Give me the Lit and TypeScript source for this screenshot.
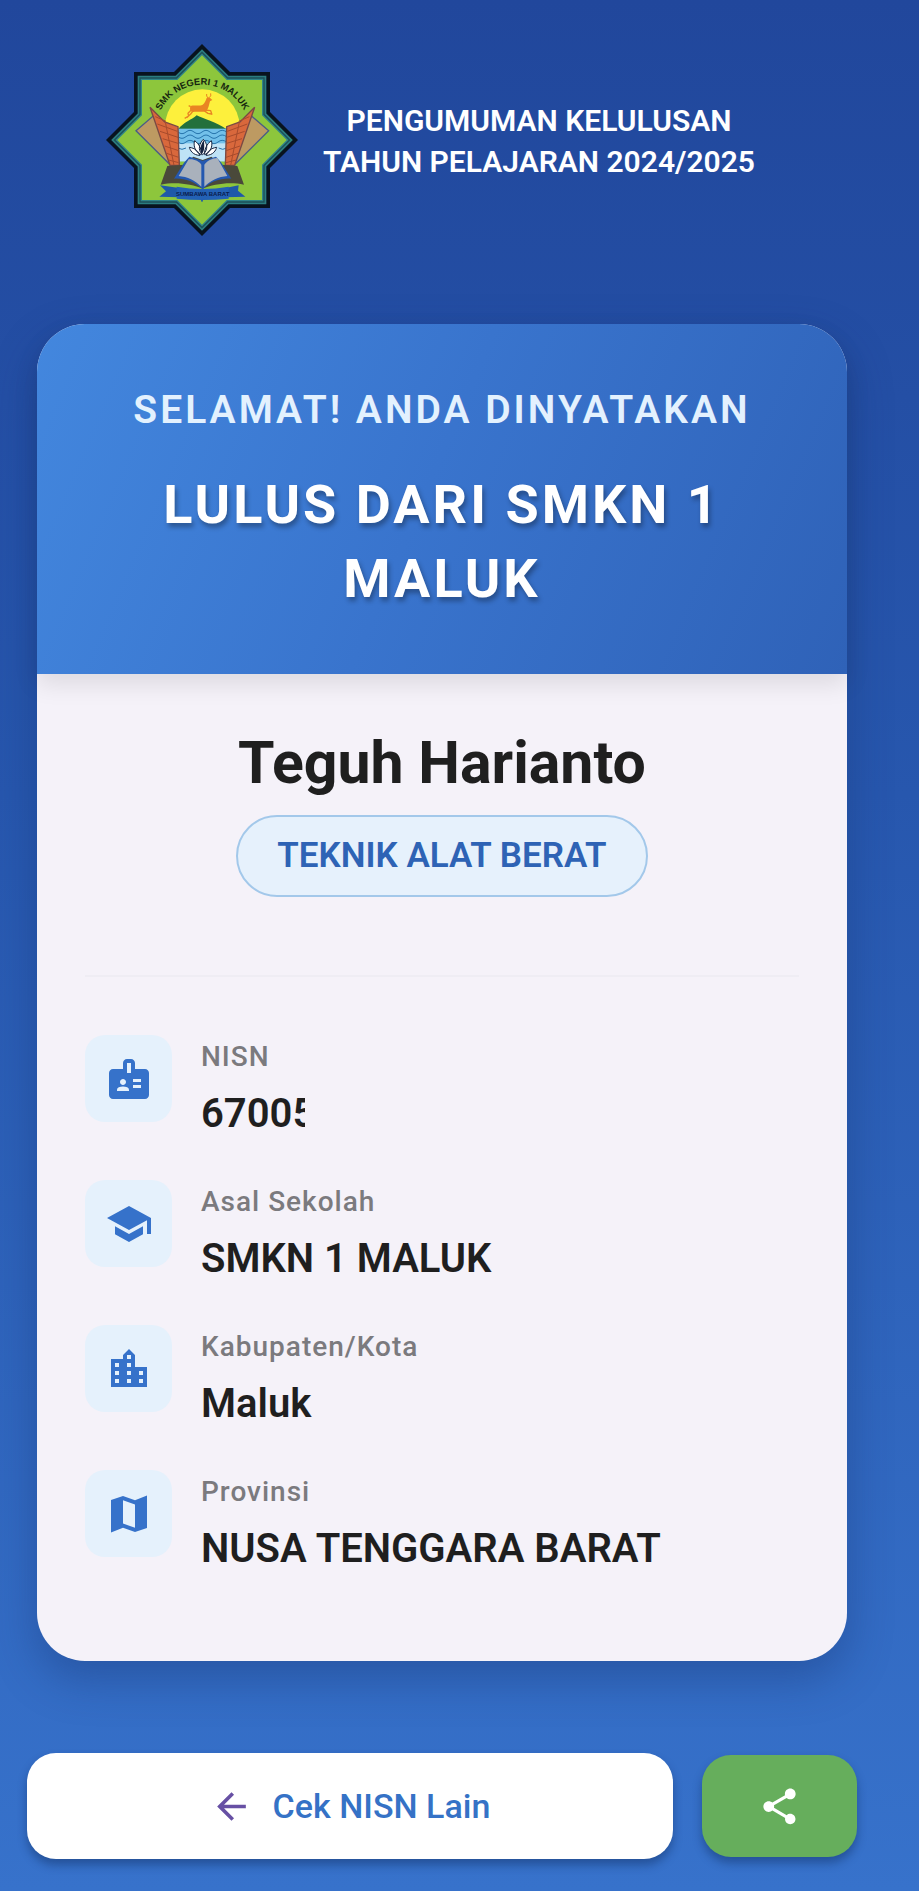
import { LitElement, html, css, svg } from "lit";
import { customElement, property } from "lit/decorators.js";

const ICONS: Record<string, string> = {
  badge:
    "M20 7h-5V4c0-1.1-.9-2-2-2h-2c-1.1 0-2 .9-2 2v3H4c-1.1 0-2 .9-2 2v11c0 1.1.9 2 2 2h16c1.1 0 2-.9 2-2V9c0-1.1-.9-2-2-2zM9 12c.83 0 1.5.67 1.5 1.5S9.83 15 9 15s-1.5-.67-1.5-1.5S8.17 12 9 12zm3 6H6v-.43c0-.6.36-1.15.92-1.39.65-.28 1.35-.43 2.08-.43s1.43.15 2.08.43c.56.24.92.78.92 1.39V18zm1-9h-2V4h2v5zm5 7.5h-4V15h4v1.5zm0-3h-4V12h4v1.5z",
  school:
    "M5 13.18v4L12 21l7-3.82v-4L12 17l-7-3.82zM12 3L1 9l11 6 9-4.91V17h2V9L12 3z",
  city:
    "M15 11V5l-3-3-3 3v2H3v14h18V11h-6zm-8 8H5v-2h2v2zm0-4H5v-2h2v2zm0-4H5V9h2v2zm6 8h-2v-2h2v2zm0-4h-2v-2h2v2zm0-4h-2V9h2v2zm0-4h-2V5h2v2zm6 12h-2v-2h2v2zm0-4h-2v-2h2v2z",
  map:
    "M15 5.1L9 3 3 5.02v16.2l6-2.33 6 2.1 6-2.02V2.77L15 5.1zm0 13.79l-6-2.11V5.11l6 2.11v11.67z",
  back:
    "M20 11H7.83l5.59-5.59L12 4l-8 8 8 8 1.41-1.41L7.83 13H20v-2z",
  share:
    "M18 16.08c-.76 0-1.44.3-1.96.77L8.91 12.7c.05-.23.09-.46.09-.7s-.04-.47-.09-.7l7.05-4.11c.54.5 1.25.81 2.04.81 1.66 0 3-1.34 3-3s-1.34-3-3-3-3 1.34-3 3c0 .24.04.47.09.7L8.04 9.81C7.5 9.31 6.79 9 6 9c-1.66 0-3 1.34-3 3s1.34 3 3 3c.79 0 1.5-.31 2.04-.81l7.12 4.16c-.05.21-.08.43-.08.65 0 1.61 1.31 2.92 2.92 2.92s2.92-1.31 2.92-2.92-1.31-2.92-2.92-2.92z",
};

@customElement("md-icon")
class MdIcon extends LitElement {
  @property() name = "badge";

  static styles = css`
    :host {
      display: inline-flex;
      width: 48px;
      height: 48px;
    }
    svg {
      width: 100%;
      height: 100%;
      fill: currentColor;
    }
  `;

  render() {
    return html`<svg viewBox="0 0 24 24" aria-hidden="true">
      <path d=${ICONS[this.name]}></path>
    </svg>`;
  }
}

/** Eight-pointed star: a square and a diamond laid over each other, shrunk by `inset`. */
function star(inset: number): string {
  const c = 316;
  const h = 204 - inset;
  const r = 288 - inset * 1.414;
  const k = r - h;
  const pts = [
    [0, -r], [k, -h], [h, -h], [h, -k], [r, 0], [h, k], [h, h], [k, h],
    [0, r], [-k, h], [-h, h], [-h, k], [-r, 0], [-h, -k], [-h, -h], [-k, -h],
  ];
  return pts.map(([x, y]) => `${c + x},${c + y}`).join(" ");
}

@customElement("school-crest")
class SchoolCrest extends LitElement {
  static styles = css`
    :host {
      display: block;
      width: 194px;
      height: 194px;
    }
    svg {
      display: block;
      width: 100%;
      height: 100%;
    }
    .motto {
      font: 700 28px "Liberation Sans", Arial, sans-serif;
      fill: #17260f;
    }
    .region {
      font: 700 18px "Liberation Sans", Arial, sans-serif;
      fill: #0a1c4c;
    }
  `;

  private wall(flip: boolean) {
    return svg`<g transform=${flip ? "translate(634 0) scale(-1 1)" : ""}>
      <polygon points="118,288 172,242 244,300 246,392 222,392" fill="#bd9a62" stroke="#4b5c86" stroke-width="4"></polygon>
      <polygon points="160,218 204,262 244,276 248,392 220,392" fill="#d9683c" stroke="#7a4a44" stroke-width="4"></polygon>
      <path d="M206 262L232 392M176 246l32 14M182 268l60 22M190 290l54 18M198 312l46 14M204 334l42 14M210 356l36 12M216 376l30 8" fill="none" stroke="#a84b2c" stroke-width="3"></path>
    </g>`;
  }

  render() {
    return html`<svg viewBox="25 25 582 582" role="img" aria-label="Logo SMK Negeri 1 Maluk">
      <polygon points=${star(0)} fill="#08131f"></polygon>
      <polygon points=${star(11)} fill="#2b7d80"></polygon>
      <polygon points=${star(16)} fill="#1d4f58"></polygon>
      <polygon points=${star(20)} fill="#2f8489"></polygon>
      <polygon points=${star(24)} fill="#8dc63c"></polygon>

      <circle cx="317" cy="276" r="112" fill="#fdf03c"></circle>
      <path d="M282 214C294 210 306 216 318 210C324 206 327 198 330 190L338 188 347 196 340 200C337 210 336 220 330 228C318 234 300 230 290 232C280 232 278 222 282 214z" fill="#e98423"></path>
      <path d="M286 224L274 236 276 244 264 251M290 228L282 238 270 249M324 226L342 228 346 240M322 228L334 236 344 238M282 216l-6 -3" fill="none" stroke="#e98423" stroke-width="4" stroke-linejoin="round"></path>
      <path d="M334 190q-6-6-4-12M337 189q8-4 5-13" fill="none" stroke="#e98423" stroke-width="3"></path>
      <path d="M244 284C262 262 284 256 300 242C318 252 360 262 390 284z" fill="#23703c"></path>

      <rect x="244" y="282" width="146" height="98" fill="#72c0ea"></rect>
      <rect x="244" y="326" width="146" height="54" fill="#bfe3f6"></rect>
      <path d="M244 292q12 10 24 0t24 0 24 0 24 0 24 0 26 0M244 306q12 10 24 0t24 0 24 0 24 0 24 0 26 0M244 322q12 10 24 0t24 0 24 0 24 0 24 0 26 0M244 340q12 8 24 0M366 340q12 8 24 0" fill="none" stroke="#2674ac" stroke-width="3"></path>
      <path d="M318 360C300 346 310 324 320 314C332 326 336 346 318 360zM314 360C292 352 290 328 294 318C308 328 316 346 314 360zM324 360C346 352 348 328 344 318C330 328 322 346 324 360zM310 362C288 362 280 346 278 338C294 340 306 350 310 362zM328 362C350 362 358 346 360 338C344 340 332 350 328 362z" fill="#ffffff" stroke="#15233f" stroke-width="3"></path>
      <path d="M316 358c-10-16 0-34 6-42 0 14 4 28-6 42z" fill="#15233f"></path>

      ${this.wall(false)} ${this.wall(true)}

      <path d="M192 450L212 394 262 390 290 366 318 376 344 366 374 390 422 394 442 450C400 440 350 448 318 462C286 448 236 440 192 450z" fill="#4a493a"></path>
      <path d="M232 432L262 384 278 366 318 378 358 366 374 384 404 432C372 430 342 440 318 464C292 440 262 430 232 432z" fill="#2458b0"></path>
      <path d="M246 424L276 374C292 372 308 380 314 390L314 456C296 438 272 426 246 424z" fill="#a9b1bc"></path>
      <path d="M392 424L362 370C346 370 330 380 323 390L323 456C342 438 366 426 392 424z" fill="#a9b1bc"></path>

      <path d="M190 452L248 460 248 488 188 486 208 470zM446 486L386 488 386 460 426 452 424 468z" fill="#1f59a8"></path>
      <path d="M240 456Q318 470 396 456L396 492Q318 500 240 492z" fill="#2361b5"></path>
      <text class="region" x="318" y="485" text-anchor="middle">SUMBAWA BARAT</text>
      <circle cx="316" cy="498" r="3" fill="#1f59a8"></circle>

      <path id="arc" d="M178 289A139 139 0 0 1 456 289" fill="none"></path>
      <text class="motto" text-anchor="middle">
        <textPath href="#arc" startOffset="50%">SMK NEGERI 1 MALUK</textPath>
      </text>
    </svg>`;
  }
}

interface Detail {
  icon: string;
  label: string;
  value: string;
  masked?: boolean;
}

@customElement("app-root")
class AppRoot extends LitElement {
  private details: Detail[] = [
    { icon: "badge", label: "NISN", value: "67005", masked: true },
    { icon: "school", label: "Asal Sekolah", value: "SMKN 1 MALUK" },
    { icon: "city", label: "Kabupaten/Kota", value: "Maluk" },
    { icon: "map", label: "Provinsi", value: "NUSA TENGGARA BARAT" },
  ];

  static styles = css`
    :host {
      display: block;
      box-sizing: border-box;
      min-height: 100vh;
      padding: 43px 35px 32px 0;
      background: linear-gradient(180deg, #21479c 0%, #2757ae 42%, #3772cb 100%);
      font-family: Roboto, sans-serif;
      color: #1f1f1f;
    }
    .top {
      display: flex;
      justify-content: center;
      align-items: center;
      gap: 24px;
      padding: 0 24px 0 0;
    }
    h1, h2, p, dl, dt, dd {
      margin: 0;
    }
    h1 {
      padding-top: 2px;
      font-size: 30px;
      line-height: 41px;
      font-weight: 600;
      text-align: center;
      color: #ffffff;
    }
    .card {
      margin: 87px 37px 0;
      border-radius: 48px;
      background: #f5f2f9;
      box-shadow: 0 18px 44px rgba(20, 50, 110, 0.38);
    }
    .banner {
      padding: 58px 64px;
      border-radius: 48px 48px 0 0;
      background: linear-gradient(113deg, #4387de 0%, #3974cd 48%, #2f62b8 100%);
      box-shadow: 0 10px 24px rgba(0, 0, 0, 0.1);
      text-align: center;
    }
    .congrats {
      font-size: 39px;
      line-height: 56px;
      font-weight: 600;
      letter-spacing: 3px;
      color: #e3f1fe;
    }
    .result {
      margin-top: 30px;
      font-size: 54px;
      line-height: 74px;
      font-weight: 700;
      letter-spacing: 3px;
      color: #ffffff;
      text-shadow: 2px 4px 5px rgba(0, 0, 0, 0.32);
    }
    .body {
      display: flex;
      flex-direction: column;
      align-items: center;
      padding: 54px 48px 84px;
    }
    .name {
      font-size: 59px;
      line-height: 70px;
      font-weight: 700;
    }
    .major {
      margin-top: 17px;
      padding: 19px 39px;
      border: 2px solid #a3c8ea;
      border-radius: 48px;
      background: #e6f1fc;
      font-size: 35px;
      line-height: 40px;
      font-weight: 600;
      color: #2e63b5;
    }
    .rule {
      width: 100%;
      height: 2px;
      margin: 78px 0 58px;
      border: 0;
      background: #efedf4;
    }
    .details {
      display: grid;
      gap: 38px;
      width: 100%;
    }
    .row {
      display: flex;
      gap: 29px;
    }
    .tile {
      display: flex;
      align-items: center;
      justify-content: center;
      flex: none;
      width: 87px;
      height: 87px;
      border-radius: 20px;
      background: #e5f1fc;
      color: #3672ca;
    }
    dt {
      padding-top: 2px;
      font-size: 28px;
      line-height: 40px;
      font-weight: 500;
      letter-spacing: 1px;
      color: #7b7a7e;
    }
    dd {
      margin-top: 9px;
      font-size: 40px;
      line-height: 56px;
      font-weight: 600;
    }
    .masked {
      width: 104px;
      overflow: hidden;
    }
    .actions {
      display: flex;
      align-items: center;
      gap: 29px;
      margin: 92px 27px 0;
    }
    button {
      display: flex;
      align-items: center;
      justify-content: center;
      border: 0;
      border-radius: 29px;
      font-family: inherit;
      box-shadow: 0 6px 10px rgba(10, 35, 80, 0.4);
      cursor: pointer;
    }
    .again {
      flex: 1;
      gap: 20px;
      height: 106px;
      background: #ffffff;
      font-size: 34px;
      line-height: 40px;
      font-weight: 500;
      color: #3572c6;
    }
    .share {
      width: 155px;
      height: 102px;
      background: #66ae5c;
      color: #ffffff;
    }
    .small {
      width: 43px;
      height: 43px;
    }
    .arrow {
      color: #6750a4;
    }
  `;

  render() {
    return html`
      <header class="top">
        <school-crest></school-crest>
        <h1>PENGUMUMAN KELULUSAN<br />TAHUN PELAJARAN 2024/2025</h1>
      </header>
      <main>
        <article class="card">
          <div class="banner">
            <p class="congrats">SELAMAT! ANDA DINYATAKAN</p>
            <p class="result">LULUS DARI SMKN 1 MALUK</p>
          </div>
          <div class="body">
            <h2 class="name">Teguh Harianto</h2>
            <p class="major">TEKNIK ALAT BERAT</p>
            <hr class="rule" />
            <dl class="details">
              ${this.details.map(
                (d) => html`<div class="row">
                  <span class="tile"><md-icon name=${d.icon}></md-icon></span>
                  <div>
                    <dt>${d.label}</dt>
                    <dd class=${d.masked ? "masked" : ""}>${d.value}</dd>
                  </div>
                </div>`
              )}
            </dl>
          </div>
        </article>
        <div class="actions">
          <button class="again" type="button">
            <md-icon class="small arrow" name="back"></md-icon>
            <span>Cek NISN Lain</span>
          </button>
          <button class="share" type="button" aria-label="Bagikan">
            <md-icon class="small" name="share"></md-icon>
          </button>
        </div>
      </main>
    `;
  }
}
